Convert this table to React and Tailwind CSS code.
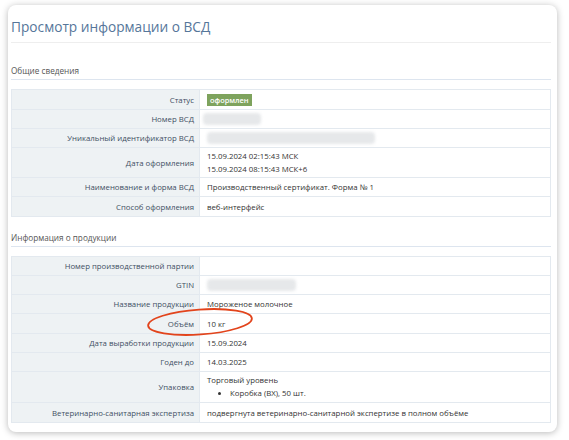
import React from 'react';

const Blur = ({ w }) => (
  <div className={`h-[12px] ${w} bg-[#e6e8ea] blur-[1.5px] rounded-sm`} />
);

const Row = ({ label, children, h = 'h-[19px]' }) => (
  <div className={`flex ${h} border-b border-[#e3e9ef] last:border-b-0`}>
    <div className="w-[188px] shrink-0 bg-[#eef2f4] border-r border-[#e3e9ef] pr-[5px] text-[#3e4f63] flex items-center justify-end text-right">
      {label}
    </div>
    <div className="flex-1 pl-[7px] text-[#333] flex flex-col justify-center">
      {children}
    </div>
  </div>
);

const Section = ({ title, children, className }) => (
  <div className={className}>
    <div className="text-[8.2px] leading-[13px] text-[#555] pb-[2px] border-b border-[#dde5ef] mb-[9px]">{title}</div>
    <div className="border border-[#e3e9ef] text-[7.8px] leading-[12px]">{children}</div>
  </div>
);

export default function App() {
  return (
    <div
      className="w-[569px] h-[440px] bg-white pt-[5px] pl-[8px]"
      style={{ fontFamily: '"Open Sans", "Noto Sans", sans-serif' }}
    >
      <div className="relative w-[549px] h-[427px] bg-white rounded-[8px] shadow-[0_1px_7px_rgba(0,0,0,0.28)] pl-[3px] pr-[6px]">
        <div className="h-[38px] text-[13.7px] leading-[20px] text-[#56769a] pt-[12px] border-b border-[#eeeeee]">
          Просмотр информации о ВСД
        </div>

        <Section title="Общие сведения" className="mt-[21px]">
          <Row label="Статус" h="h-[20px]">
            <span className="self-start bg-[#7ea35d] text-white font-semibold text-[7.4px] px-[3px] leading-[12px]">оформлен</span>
          </Row>
          <Row label="Номер ВСД">
            <div className="-ml-[4px]"><Blur w="w-[58px]" /></div>
          </Row>
          <Row label="Уникальный идентификатор ВСД">
            <Blur w="w-[168px]" />
          </Row>
          <Row label="Дата оформления" h="h-[30px]">
            <div className="leading-[12.5px]">15.09.2024 02:15:43 МСК</div>
            <div className="leading-[12.5px]">15.09.2024 08:15:43 МСК+6</div>
          </Row>
          <Row label="Наименование и форма ВСД">Производственный сертификат. Форма № 1</Row>
          <Row label="Способ оформления">веб-интерфейс</Row>
        </Section>

        <Section title="Информация о продукции" className="mt-[14px]">
          <Row label="Номер производственной партии">&nbsp;</Row>
          <Row label="GTIN">
            <Blur w="w-[89px]" />
          </Row>
          <Row label="Название продукции">Мороженое молочное</Row>
          <Row label="Объём" h="h-[20px]">10 кг</Row>
          <Row label="Дата выработки продукции">15.09.2024</Row>
          <Row label="Годен до">14.03.2025</Row>
          <Row label="Упаковка" h="h-[31px]">
            <div className="leading-[13px]">Торговый уровень</div>
            <ul className="list-disc pl-[23px] leading-[13px]">
              <li>Коробка (ВХ), 50 шт.</li>
            </ul>
          </Row>
          <Row label="Ветеринарно-санитарная экспертиза">подвергнута ветеринарно-санитарной экспертизе в полном объёме</Row>
        </Section>

        <svg className="absolute left-[132px] top-[297px] pointer-events-none" width="124" height="40" viewBox="0 0 124 40">
          <ellipse cx="60" cy="20" rx="52" ry="12.5" transform="rotate(-4 60 20)" fill="none" stroke="#e2441c" strokeWidth="1.8" />
        </svg>
      </div>
    </div>
  );
}
